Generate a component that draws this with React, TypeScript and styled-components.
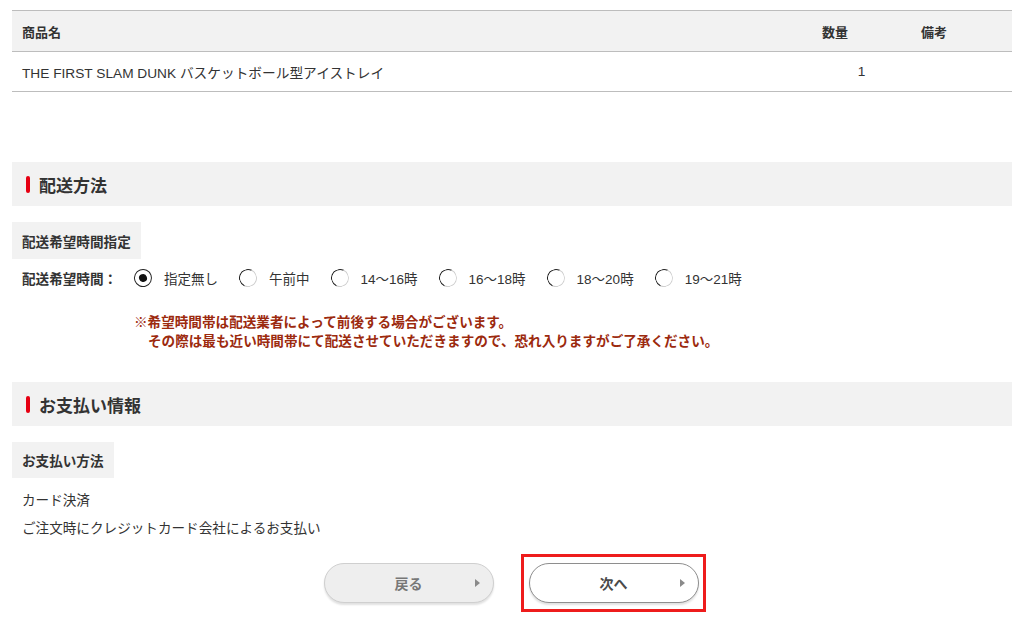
import React, { useState } from 'react'
import styled, { createGlobalStyle } from 'styled-components'

const GlobalStyle = createGlobalStyle`
  body {
    margin: 0;
    background: #fff;
    font-family: 'Liberation Sans', 'Noto Sans CJK JP', sans-serif;
    color: #333;
  }
`

const Wrapper = styled.div`
  padding: 10px 12px 0;
`

const Table = styled.table`
  width: 100%;
  border-collapse: separate;
  border-spacing: 0;
  border-top: 1px solid #bdbdbd;
`

const Th = styled.th<{ w?: number }>`
  box-sizing: border-box;
  height: 41px;
  padding: 0 10px;
  background: #f2f2f2;
  border-bottom: 1px solid #bdbdbd;
  font-size: 13px;
  font-weight: bold;
  text-align: left;
  width: ${(p) => (p.w ? `${p.w}px` : 'auto')};
`

const Td = styled.td<{ center?: boolean }>`
  box-sizing: border-box;
  height: 40px;
  padding: 0 10px;
  border-bottom: 1px solid #bdbdbd;
  font-size: 13.7px;
  text-align: ${(p) => (p.center ? 'center' : 'left')};
`

const SectionHead = styled.div<{ top: number }>`
  margin-top: ${(p) => p.top}px;
  height: 44px;
  background: #f2f2f2;
  display: flex;
  align-items: center;
  padding-left: 14px;
  gap: 9px;
  font-size: 17px;
  font-weight: bold;
  color: #333;
`

const RedBar = styled.span`
  width: 4px;
  height: 17px;
  border-radius: 2px;
  background: #e60012;
`

const SubLabel = styled.div<{ h: number }>`
  margin-top: 16px;
  display: inline-flex;
  align-items: center;
  height: ${(p) => p.h}px;
  padding: 0 10px;
  background: #f2f2f2;
  font-size: 13.6px;
  font-weight: bold;
`

const RadioRow = styled.div`
  margin-top: 9px;
  height: 20px;
  display: flex;
  align-items: center;
  padding-left: 10px;
`

const RowLabel = styled.span`
  font-size: 13.6px;
  font-weight: bold;
  width: 112px;
`

const RadioItem = styled.label`
  display: flex;
  align-items: center;
  gap: 12px;
  margin-right: 21px;
  font-size: 13.5px;
  cursor: pointer;
`

const Circle = styled.span<{ checked: boolean }>`
  width: 18px;
  height: 18px;
  box-sizing: border-box;
  border-radius: 50%;
  border: 1.5px solid;
  border-color: ${(p) => (p.checked ? '#222' : '#222 #d0d0d0 #d0d0d0 #222')};
  transform: rotate(-20deg);
  display: flex;
  align-items: center;
  justify-content: center;
  background: #fff;
  &::after {
    content: '';
    width: 8px;
    height: 8px;
    border-radius: 50%;
    background: #111;
    display: ${(p) => (p.checked ? 'block' : 'none')};
  }
`

const Note = styled.p`
  margin: 25px 0 0;
  padding-left: 122px;
  font-size: 13.6px;
  line-height: 19px;
  font-weight: bold;
  color: #9c2a0e;
`

const Indent = styled.span`
  padding-left: 14px;
`

const Payment = styled.div`
  margin-top: 9px;
  padding-left: 10px;
  font-size: 13.6px;
  line-height: 28px;
`

const ButtonRow = styled.div`
  margin-top: 11px;
  display: flex;
  align-items: center;
  justify-content: center;
  gap: 27px;
  padding-left: 5px;
`

const Highlight = styled.div`
  border: 3px solid #ee1c1c;
  padding: 6px 4px 6px 5px;
`

const NavButton = styled.button<{ primary?: boolean }>`
  position: relative;
  display: block;
  width: 170px;
  height: 40px;
  border-radius: 20px;
  border: 1px solid ${(p) => (p.primary ? '#8e8e8e' : '#cfcfcf')};
  background: ${(p) => (p.primary ? '#fff' : '#eeeeee')};
  box-shadow: 0 2px 2px rgba(0, 0, 0, 0.12);
  font-family: 'Liberation Sans', 'Noto Sans CJK JP', sans-serif;
  font-size: 14px;
  font-weight: bold;
  color: ${(p) => (p.primary ? '#4a4a4a' : '#777')};
  cursor: pointer;
  &::after {
    content: '';
    position: absolute;
    right: 13px;
    top: 50%;
    margin-top: -4px;
    border-left: 5px solid #8a8a8a;
    border-top: 4px solid transparent;
    border-bottom: 4px solid transparent;
  }
`

const slots = ['指定無し', '午前中', '14〜16時', '16〜18時', '18〜20時', '19〜21時']

const App = () => {
  const [slot, setSlot] = useState(0)
  return (
    <Wrapper>
      <GlobalStyle />
      <Table>
        <thead>
          <tr>
            <Th>商品名</Th>
            <Th w={99}>数量</Th>
            <Th w={101}>備考</Th>
          </tr>
        </thead>
        <tbody>
          <tr>
            <Td>THE FIRST SLAM DUNK バスケットボール型アイストレイ</Td>
            <Td center>1</Td>
            <Td></Td>
          </tr>
        </tbody>
      </Table>

      <SectionHead top={70}>
        <RedBar />
        配送方法
      </SectionHead>
      <SubLabel h={37}>配送希望時間指定</SubLabel>
      <RadioRow>
        <RowLabel>配送希望時間：</RowLabel>
        {slots.map((s, i) => (
          <RadioItem key={s} onClick={() => setSlot(i)}>
            <Circle checked={slot === i} />
            {s}
          </RadioItem>
        ))}
      </RadioRow>
      <Note>
        ※希望時間帯は配送業者によって前後する場合がございます。
        <br />
        <Indent>その際は最も近い時間帯にて配送させていただきますので、恐れ入りますがご了承ください。</Indent>
      </Note>

      <SectionHead top={31}>
        <RedBar />
        お支払い情報
      </SectionHead>
      <SubLabel h={36}>お支払い方法</SubLabel>
      <Payment>
        <div>カード決済</div>
        <div>ご注文時にクレジットカード会社によるお支払い</div>
      </Payment>

      <ButtonRow>
        <NavButton>戻る</NavButton>
        <Highlight>
          <NavButton primary>次へ</NavButton>
        </Highlight>
      </ButtonRow>
    </Wrapper>
  )
}

export default App
